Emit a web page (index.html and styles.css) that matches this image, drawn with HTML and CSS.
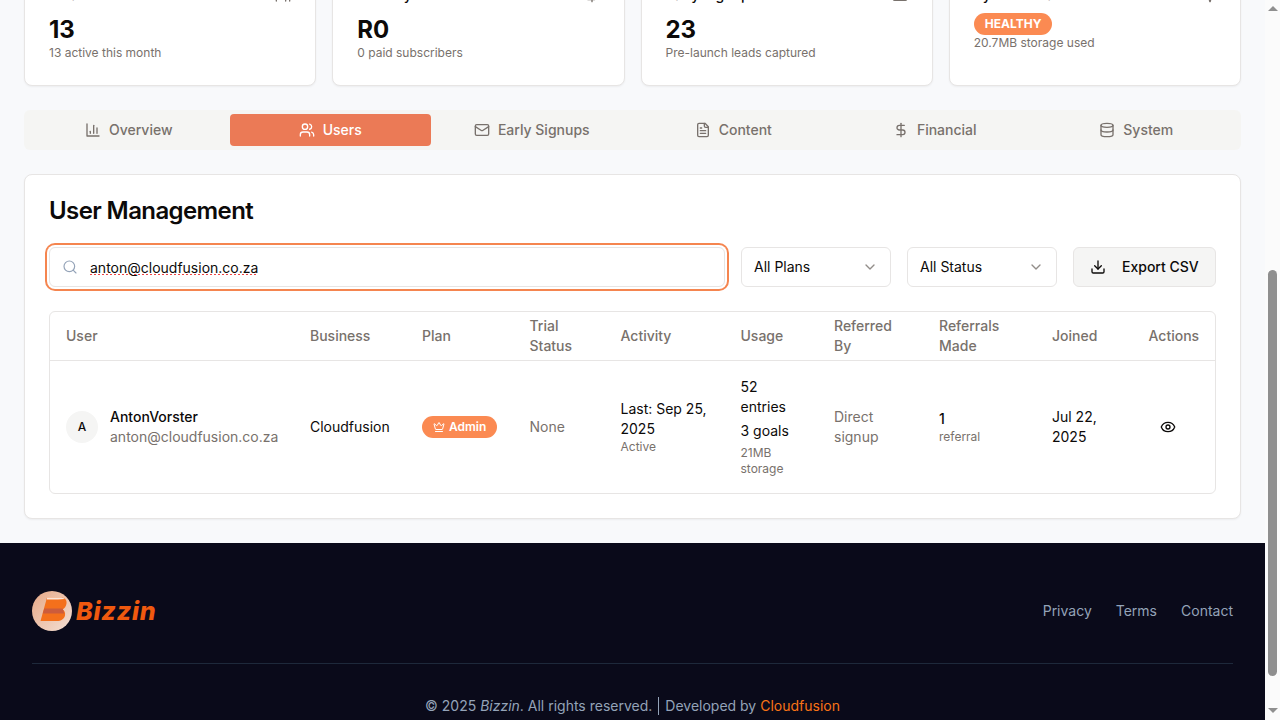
FILE: index.html
```html
<!DOCTYPE html>
<html lang="en">
<head>
<meta charset="UTF-8">
<meta name="viewport" content="width=device-width, initial-scale=1.0">
<title>Bizzin Admin</title>
<link rel="stylesheet" href="styles.css">
</head>
<body>
<div class="window">
    <div class="page">
        <main class="content">
            <div class="stats">
                <div class="stat-card">
                    <div class="stat-head">
                        <span>Total Users</span>
                        <svg class="icon" viewBox="0 0 24 24"><path d="M16 21v-2a4 4 0 0 0-4-4H6a4 4 0 0 0-4 4v2"/><circle cx="9" cy="7" r="4"/><path d="M22 21v-2a4 4 0 0 0-3-3.87"/><path d="M16 3.13a4 4 0 0 1 0 7.75"/></svg>
                    </div>
                    <div class="stat-value">13</div>
                    <div class="stat-note">13 active this month</div>
                </div>
                <div class="stat-card">
                    <div class="stat-head">
                        <span>Monthly Revenue</span>
                        <svg class="icon" viewBox="0 0 24 24"><path d="M12 2v20"/><path d="M17 5H9.5a3.5 3.5 0 0 0 0 7h5a3.5 3.5 0 0 1 0 7H6"/></svg>
                    </div>
                    <div class="stat-value">R0</div>
                    <div class="stat-note">0 paid subscribers</div>
                </div>
                <div class="stat-card">
                    <div class="stat-head">
                        <span>Early Signups</span>
                        <svg class="icon" viewBox="0 0 24 24"><rect x="2" y="4" width="20" height="16" rx="2"/><path d="m22 7-8.97 5.7a1.94 1.94 0 0 1-2.06 0L2 7"/></svg>
                    </div>
                    <div class="stat-value">23</div>
                    <div class="stat-note">Pre-launch leads captured</div>
                </div>
                <div class="stat-card">
                    <div class="stat-head">
                        <span>System Health</span>
                        <svg class="icon" viewBox="0 0 24 24"><path d="M22 12h-2.480a2 2 0 0 0-1.930 1.460l-2.350 8.360a.25.25 0 0 1-.48 0L9.240 2.180a.25.25 0 0 0-.48 0l-2.350 8.360A2 2 0 0 1 4.490 12H2"/></svg>
                    </div>
                    <span class="health-badge">HEALTHY</span>
                    <div class="stat-note">20.7MB storage used</div>
                </div>
            </div>

            <nav class="tabs">
                <div class="tab">
                    <svg class="icon" viewBox="0 0 24 24"><path d="M3 3v18h18"/><path d="M18 17V9"/><path d="M13 17V5"/><path d="M8 17v-3"/></svg>
                    Overview
                </div>
                <div class="tab active">
                    <svg class="icon" viewBox="0 0 24 24"><path d="M16 21v-2a4 4 0 0 0-4-4H6a4 4 0 0 0-4 4v2"/><circle cx="9" cy="7" r="4"/><path d="M22 21v-2a4 4 0 0 0-3-3.87"/><path d="M16 3.13a4 4 0 0 1 0 7.75"/></svg>
                    Users
                </div>
                <div class="tab">
                    <svg class="icon" viewBox="0 0 24 24"><rect x="2" y="4" width="20" height="16" rx="2"/><path d="m22 7-8.97 5.7a1.94 1.94 0 0 1-2.06 0L2 7"/></svg>
                    Early Signups
                </div>
                <div class="tab">
                    <svg class="icon" viewBox="0 0 24 24"><path d="M15 2H6a2 2 0 0 0-2 2v16a2 2 0 0 0 2 2h12a2 2 0 0 0 2-2V7Z"/><path d="M14 2v4a2 2 0 0 0 2 2h4"/><path d="M16 13H8"/><path d="M16 17H8"/><path d="M10 9H8"/></svg>
                    Content
                </div>
                <div class="tab">
                    <svg class="icon" viewBox="0 0 24 24"><path d="M12 2v20"/><path d="M17 5H9.5a3.5 3.5 0 0 0 0 7h5a3.5 3.5 0 0 1 0 7H6"/></svg>
                    Financial
                </div>
                <div class="tab">
                    <svg class="icon" viewBox="0 0 24 24"><ellipse cx="12" cy="5" rx="9" ry="3"/><path d="M3 5v14a9 3 0 0 0 18 0V5"/><path d="M3 12a9 3 0 0 0 18 0"/></svg>
                    System
                </div>
            </nav>

            <section class="panel">
                <h2 class="panel-title">User Management</h2>
                <div class="filters">
                    <div class="search">
                        <svg class="icon search-icon" viewBox="0 0 24 24"><circle cx="11" cy="11" r="8"/><path d="m21 21-4.3-4.3"/></svg>
                        <span class="search-text">anton@cloudfusion.co.za</span>
                    </div>
                    <div class="select">
                        All Plans
                        <svg class="icon chevron" viewBox="0 0 24 24"><path d="m6 9 6 6 6-6"/></svg>
                    </div>
                    <div class="select">
                        All Status
                        <svg class="icon chevron" viewBox="0 0 24 24"><path d="m6 9 6 6 6-6"/></svg>
                    </div>
                    <button class="export">
                        <svg class="icon" viewBox="0 0 24 24"><path d="M21 15v4a2 2 0 0 1-2 2H5a2 2 0 0 1-2-2v-4"/><polyline points="7 10 12 15 17 10"/><line x1="12" y1="15" x2="12" y2="3"/></svg>
                        Export CSV
                    </button>
                </div>

                <div class="table-box">
                    <table>
                        <colgroup>
                            <col class="col-user"><col class="col-business"><col class="col-plan"><col class="col-trial"><col class="col-activity">
                            <col class="col-usage"><col class="col-referred"><col class="col-referrals"><col class="col-joined"><col class="col-actions">
                        </colgroup>
                        <thead>
                            <tr>
                                <th>User</th>
                                <th>Business</th>
                                <th>Plan</th>
                                <th>Trial Status</th>
                                <th>Activity</th>
                                <th>Usage</th>
                                <th>Referred By</th>
                                <th>Referrals Made</th>
                                <th>Joined</th>
                                <th>Actions</th>
                            </tr>
                        </thead>
                        <tbody>
                            <tr>
                                <td>
                                    <div class="user">
                                        <div class="avatar">A</div>
                                        <div>
                                            <div class="user-name">AntonVorster</div>
                                            <div class="muted">anton@cloudfusion.co.za</div>
                                        </div>
                                    </div>
                                </td>
                                <td>Cloudfusion</td>
                                <td>
                                    <span class="plan-badge">
                                        <svg class="crown" viewBox="0 0 24 24"><path d="M11.56 3.27a.5.5 0 0 1 .88 0l2.95 5.6a1 1 0 0 0 1.52.3l4.28-3.67a.5.5 0 0 1 .8.5l-2.84 10.25a1 1 0 0 1-.96.75H5.81a1 1 0 0 1-.96-.75L2.01 6a.5.5 0 0 1 .8-.5l4.28 3.67a1 1 0 0 0 1.52-.3z"/><path d="M5 21h14"/></svg>
                                        Admin
                                    </span>
                                </td>
                                <td class="muted">None</td>
                                <td>
                                    <div>Last: Sep 25, 2025</div>
                                    <div class="small">Active</div>
                                </td>
                                <td>
                                    <div>52 entries</div>
                                    <div class="goals">3 goals</div>
                                    <div class="small goals">21MB storage</div>
                                </td>
                                <td class="muted">Direct signup</td>
                                <td>
                                    <div class="ref-count">1</div>
                                    <div class="small">referral</div>
                                </td>
                                <td>Jul 22, 2025</td>
                                <td>
                                    <button class="view">
                                        <svg class="icon" viewBox="0 0 24 24"><path d="M2.06 12.35a1 1 0 0 1 0-.7 10.75 10.75 0 0 1 19.88 0 1 1 0 0 1 0 .7 10.75 10.75 0 0 1-19.88 0"/><circle cx="12" cy="12" r="3"/></svg>
                                    </button>
                                </td>
                            </tr>
                        </tbody>
                    </table>
                </div>
            </section>
        </main>

        <footer class="footer">
            <div class="footer-top">
                <div class="brand">
                    <svg class="logo" viewBox="0 0 40 40">
                        <defs>
                            <linearGradient id="logoBg" x1="0" y1="0" x2="1" y2="1">
                                <stop offset="0" stop-color="#e6a886"/>
                                <stop offset="1" stop-color="#f4e0d5"/>
                            </linearGradient>
                        </defs>
                        <circle cx="20" cy="20" r="20" fill="url(#logoBg)"/>
                        <path d="M15 6.500H29C33 6.500 35 9 34.500 12.500C34.100 15.500 32.500 17.500 30.500 18.500C32.500 19.500 33.500 21.500 33 24.500C32.300 28 29 30 25 30H8.500Z" fill="#f4701c"/>
                        <path d="M12.300 17.500H30.500L31.500 19.500L32 22.500H10.800Z" fill="#cc5c3c"/>
                        <path d="M15 6.500H29C30.500 6.500 31.500 7 32.500 8L26 8.500H15Z" fill="#fbe6da"/>
                    </svg>
                    <span class="brand-name">Bizzin</span>
                </div>
                <div class="footer-links">
                    <a>Privacy</a>
                    <a>Terms</a>
                    <a>Contact</a>
                </div>
            </div>
            <div class="copyright">
                © 2025 <em>Bizzin</em>. All rights reserved.<span class="divider"></span>Developed by <a class="credit">Cloudfusion</a>
            </div>
        </footer>
    </div>

    <div class="scrollbar">
        <span class="arrow-up"></span>
        <div class="track"><div class="thumb"></div></div>
        <span class="arrow-down"></span>
    </div>
</div>
</body>
</html>
```

FILE: styles.css
```css
* {
    box-sizing: border-box;
}

html, body {
    margin: 0;
    height: 720px;
    overflow: hidden;
}

body {
    font-family: Inter, "Liberation Sans", sans-serif;
    font-size: 14px;
    line-height: 20px;
    color: #0c0a09;
    background-color: #f8f9fb;
}

.window {
    display: flex;
    height: 720px;
}

.page {
    width: 1265px;
    height: 720px;
    overflow: hidden;
}

.icon {
    width: 16px;
    height: 16px;
    flex-shrink: 0;
    fill: none;
    stroke: currentColor;
    stroke-width: 2;
    stroke-linecap: round;
    stroke-linejoin: round;
}

/* page is photographed scrolled down, so the first row starts above the window */
.content {
    padding: 0 24px 24px;
    margin-top: -40px;
}

.stats {
    display: grid;
    grid-template-columns: repeat(4, 1fr);
    gap: 16px;
    margin-bottom: 24px;
    width: 1217px;
}

.stat-card {
    padding: 24px;
    background-color: #fff;
    border: 1px solid #e7e5e4;
    border-radius: 8px;
    box-shadow: 0 1px 2px rgba(0, 0, 0, 0.05);
}

.stat-head {
    display: flex;
    justify-content: space-between;
    align-items: center;
    height: 20px;
    margin-bottom: 8px;
    font-weight: 500;
}

.stat-head .icon {
    color: #78716c;
}

.stat-value {
    font-size: 24px;
    line-height: 34px;
    margin-bottom: -2px;
    font-weight: 700;
}

.stat-note {
    font-size: 12px;
    line-height: 16px;
    color: #78716c;
}

.health-badge {
    display: inline-block;
    padding: 3px 11px;
    font-size: 12px;
    line-height: 16px;
    font-weight: 700;
    color: #fff;
    background-color: #fb8a52;
    border-radius: 999px;
}

.tabs {
    display: grid;
    grid-template-columns: repeat(6, 1fr);
    width: 1217px;
    height: 40px;
    padding: 4px;
    margin-bottom: 24px;
    background-color: #f5f5f3;
    border-radius: 6px;
}

.tab {
    display: flex;
    justify-content: center;
    align-items: center;
    gap: 8px;
    font-weight: 500;
    color: #78716c;
    border-radius: 4px;
}

.tab.active {
    color: #fff;
    background-color: #eb7a56;
}

.panel {
    width: 1217px;
    padding: 24px;
    background-color: #fff;
    border: 1px solid #e7e5e4;
    border-radius: 8px;
    box-shadow: 0 1px 2px rgba(0, 0, 0, 0.05);
}

.panel-title {
    margin: 0 0 24px;
    font-size: 24px;
    line-height: 24px;
    font-weight: 600;
    letter-spacing: -0.6px;
}

.filters {
    display: flex;
    gap: 16px;
    margin-bottom: 24px;
}

.search {
    display: flex;
    align-items: center;
    flex: 1;
    height: 40px;
    padding-left: 12px;
    background-color: #fff;
    border: 1px solid #e7e5e4;
    border-radius: 6px;
    box-shadow: 0 0 0 2px #fff, 0 0 0 4px #f5854f;
}

.search-icon {
    color: #94a3b8;
    stroke-width: 1.75;
}

/* the browser's spell-check marks under the typed address */
.search-text {
    display: inline-block;
    margin: 2px 0 0 12px;
    background-image: linear-gradient(90deg, #ef4444 50%, transparent 50%);
    background-size: 4px 1px;
    background-position: 0 16px;
    background-repeat: repeat-x;
}

.select {
    display: flex;
    justify-content: space-between;
    align-items: center;
    width: 150px;
    height: 40px;
    padding: 0 12px;
    background-color: #fff;
    border: 1px solid #e7e5e4;
    border-radius: 6px;
}

.chevron {
    color: #78716c;
    opacity: 0.8;
}

.export {
    display: flex;
    align-items: center;
    gap: 16px;
    width: 143px;
    height: 40px;
    padding: 0 16px;
    font: inherit;
    font-weight: 500;
    color: #0c0a09;
    background-color: #f5f5f4;
    border: 1px solid #e7e5e4;
    border-radius: 6px;
}

.table-box {
    border: 1px solid #e7e5e4;
    border-radius: 6px;
    overflow: hidden;
}

table {
    width: 100%;
    table-layout: fixed;
    border-collapse: collapse;
}

.col-user { width: 244px; }
.col-business { width: 112px; }
.col-plan { width: 107.5px; }
.col-trial { width: 91px; }
.col-activity { width: 120px; }
.col-usage { width: 93.5px; }
.col-referred { width: 105px; }
.col-referrals { width: 113px; }
.col-joined { width: 96.5px; }
.col-actions { width: 82.5px; }

th {
    height: 48px;
    padding: 4px 16px;
    text-align: left;
    font-weight: 500;
    color: #78716c;
    border-bottom: 1px solid #e7e5e4;
}

td {
    padding: 16px;
}

.muted {
    color: #78716c;
}

.small {
    font-size: 12px;
    line-height: 16px;
    color: #78716c;
}

.goals {
    margin-top: 4px;
}

.user {
    display: flex;
    align-items: center;
    gap: 12px;
}

.avatar {
    display: flex;
    justify-content: center;
    align-items: center;
    width: 32px;
    height: 32px;
    flex-shrink: 0;
    font-size: 12px;
    font-weight: 500;
    background-color: #f5f5f4;
    border-radius: 50%;
}

.user-name {
    font-weight: 500;
}

.plan-badge {
    display: inline-flex;
    align-items: center;
    gap: 4px;
    height: 22px;
    padding: 0 11px;
    font-size: 12px;
    font-weight: 600;
    color: #fff;
    background-color: #fb8a52;
    border-radius: 999px;
    vertical-align: middle;
}

.crown {
    width: 12px;
    height: 12px;
    fill: none;
    stroke: currentColor;
    stroke-width: 2;
    stroke-linecap: round;
    stroke-linejoin: round;
}

.ref-count {
    font-weight: 500;
}

.view {
    display: flex;
    padding: 0 11px;
    background: none;
    border: none;
    color: #0c0a09;
}

.footer {
    height: 200px;
    padding: 48px 32px 0;
    background-color: #0a0a1a;
}

.footer-top {
    display: flex;
    justify-content: space-between;
    align-items: center;
    padding-bottom: 32px;
    border-bottom: 1px solid #1e293b;
}

.brand {
    display: flex;
    align-items: center;
    gap: 4px;
}

.logo {
    width: 40px;
    height: 40px;
}

.brand-name {
    font-size: 25px;
    line-height: 32px;
    font-weight: 800;
    font-style: italic;
    letter-spacing: 0.8px;
    color: #f0590f;
}

.footer-links {
    display: flex;
    gap: 24px;
    color: #94a3b8;
}

.copyright {
    margin-top: 32px;
    text-align: center;
    color: #94a3b8;
}

.divider {
    display: inline-block;
    width: 1px;
    height: 18px;
    margin: 0 6px;
    vertical-align: -4px;
    background-color: #94a3b8;
}

.credit {
    color: #f97316;
}

.scrollbar {
    display: flex;
    flex-direction: column;
    align-items: center;
    width: 15px;
    height: 720px;
    background-color: #fbfbfb;
}

.track {
    flex: 1;
    width: 100%;
    padding: 255px 3px 29px;
}

.thumb {
    height: 100%;
    background-color: #8f8f8f;
    border-radius: 5px;
}

.arrow-up,
.arrow-down {
    width: 0;
    height: 0;
    border-left: 5px solid transparent;
    border-right: 5px solid transparent;
}

.arrow-up {
    margin: 6px 0 4px;
    border-bottom: 5px solid #8f8f8f;
}

.arrow-down {
    margin: 3px 0 7px;
    border-top: 5px solid #8f8f8f;
}
```
